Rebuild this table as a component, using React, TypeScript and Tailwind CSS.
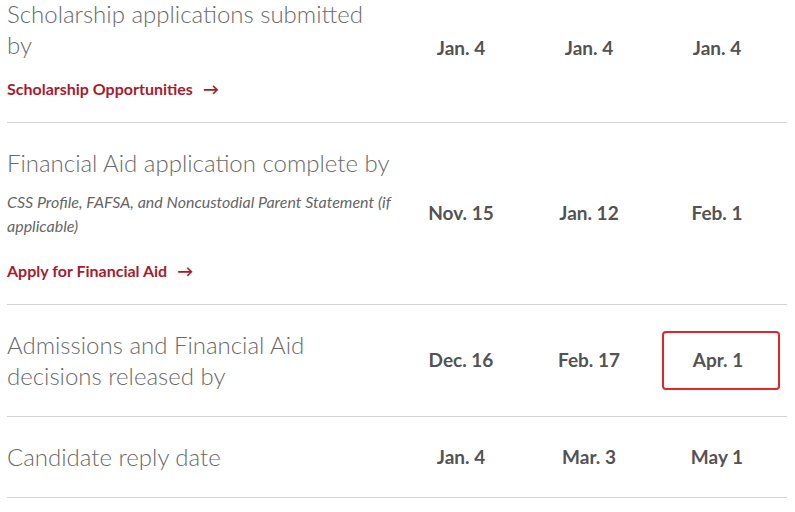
import React from "react";

type Row = {
  title: string;
  note?: string;
  link?: string;
  dates: string[];
  mark?: number;
};

const rows: Row[] = [
  {
    title: "Scholarship applications submitted by",
    link: "Scholarship Opportunities",
    dates: ["Jan. 4", "Jan. 4", "Jan. 4"],
  },
  {
    title: "Financial Aid application complete by",
    note: "CSS Profile, FAFSA, and Noncustodial Parent Statement (if applicable)",
    link: "Apply for Financial Aid",
    dates: ["Nov. 15", "Jan. 12", "Feb. 1"],
  },
  {
    title: "Admissions and Financial Aid decisions released by",
    dates: ["Dec. 16", "Feb. 17", "Apr. 1"],
    mark: 2,
  },
  {
    title: "Candidate reply date",
    dates: ["Jan. 4", "Mar. 3", "May 1"],
  },
];

const DateRow: React.FC<{ row: Row }> = ({ row }) => {
  return (
    <div className="grid grid-cols-[390px_128px_128px_128px] border-b border-[#d4d4d4]">
      <div className={row.link ? "pb-[21px] pt-[24px]" : "pb-[25px] pt-[24px]"}>
        <h3 className="max-w-[385px] text-[24px] font-light leading-[31px] text-[#6a6a6a]">
          {row.title}
        </h3>
        {row.note && (
          <p className="mt-[12px] text-[16px] italic leading-[24px] text-[#666]">
            {row.note}
          </p>
        )}
        {row.link && (
          <a
            href="#"
            className={
              (row.note ? "mt-[21px]" : "mt-[17px]") +
              " flex items-center gap-[10px] text-[16px] font-bold leading-[24px] text-[#a51c30]"
            }
          >
            {row.link}
            <span className="text-[16px] font-bold">→</span>
          </a>
        )}
      </div>
      {row.dates.map((d, i) => (
        <div key={i} className="flex items-center justify-center">
          {row.mark === i ? (
            <span className="relative left-[4px] flex h-[59px] w-[118px] items-center justify-center rounded-[4px] border-2 border-[#e3262b] pr-[6px] text-[19px] font-bold text-[#535353]">
              {d}
            </span>
          ) : (
            <span className="text-[19px] font-bold text-[#535353]">{d}</span>
          )}
        </div>
      ))}
    </div>
  );
};

export default function App() {
  return (
    <div
      className="h-[512px] w-[795px] overflow-hidden bg-white"
      style={{ fontFamily: "Lato, 'Open Sans', sans-serif" }}
    >
      <div className="-mt-[26px] w-[787px] pl-[7px]">
        {rows.map((r, i) => (
          <DateRow key={i} row={r} />
        ))}
      </div>
    </div>
  );
}
